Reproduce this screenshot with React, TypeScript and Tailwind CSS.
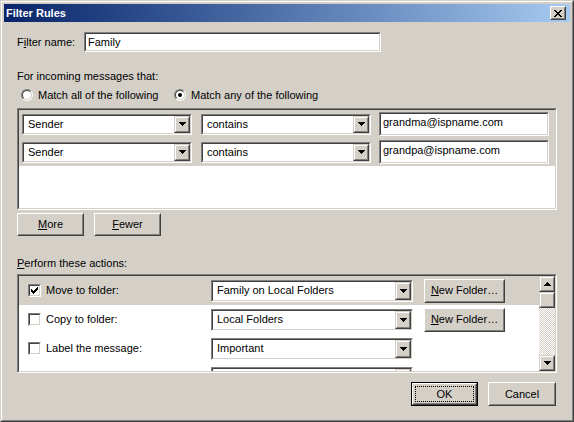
import React from 'react';

type BoxProps = { className?: string; inner?: string; children?: React.ReactNode };

// classic 3D borders
const Sunken: React.FC<BoxProps> = ({ className = '', inner = '', children }) => (
  <div className={`border border-t-[#808080] border-l-[#808080] border-r-white border-b-white ${className}`}>
    <div className={`w-full h-full border border-t-[#404040] border-l-[#404040] border-r-[#d4d0c8] border-b-[#d4d0c8] ${inner}`}>
      {children}
    </div>
  </div>
);

const Raised: React.FC<BoxProps> = ({ className = '', inner = '', children }) => (
  <div className={`bg-[#d4d0c8] border border-t-white border-l-white border-r-[#404040] border-b-[#404040] ${className}`}>
    <div className={`w-full h-full border border-t-[#d4d0c8] border-l-[#d4d0c8] border-r-[#808080] border-b-[#808080] ${inner}`}>
      {children}
    </div>
  </div>
);

const ArrowBox: React.FC<BoxProps> = ({ className = '', inner = '', children }) => (
  <div className={`bg-[#d4d0c8] border border-t-[#d4d0c8] border-l-[#d4d0c8] border-r-[#404040] border-b-[#404040] ${className}`}>
    <div className={`w-full h-full border border-t-white border-l-white border-r-[#808080] border-b-[#808080] flex items-center justify-center ${inner}`}>
      {children}
    </div>
  </div>
);

const DownArrow = () => (
  <svg width="7" height="4" viewBox="0 0 7 4" shapeRendering="crispEdges">
    <path d="M0 0h7v1H0zM1 1h5v1H1zM2 2h3v1H2zM3 3h1v1H3z" fill="#000" />
  </svg>
);

const UpArrow = () => (
  <svg width="7" height="4" viewBox="0 0 7 4" shapeRendering="crispEdges">
    <path d="M3 0h1v1H3zM2 1h3v1H2zM1 2h5v1H1zM0 3h7v1H0z" fill="#000" />
  </svg>
);

const CloseX = () => (
  <svg width="8" height="7" viewBox="0 0 8 7" shapeRendering="crispEdges">
    <path
      d="M0 0h2v1H0zM6 0h2v1H6zM1 1h2v1H1zM5 1h2v1H5zM2 2h4v1H2zM3 3h2v1H3zM2 4h4v1H2zM1 5h2v1H1zM5 5h2v1H5zM0 6h2v1H0zM6 6h2v1H6z"
      fill="#000"
    />
  </svg>
);

const Combo: React.FC<{ className: string; text: string }> = ({ className, text }) => (
  <Sunken className={`shrink-0 ${className}`} inner="bg-white flex items-stretch">
    <span className="flex-1 flex items-center pl-[4px] whitespace-nowrap overflow-hidden">{text}</span>
    <ArrowBox className="w-[16px] shrink-0">
      <DownArrow />
    </ArrowBox>
  </Sunken>
);

const Radio: React.FC<{ checked?: boolean }> = ({ checked }) => (
  <div className="w-[12px] h-[12px] shrink-0 rounded-full border border-t-[#808080] border-l-[#808080] border-r-white border-b-white">
    <div className="w-full h-full rounded-full border border-t-[#404040] border-l-[#404040] border-r-[#d4d0c8] border-b-[#d4d0c8] bg-white flex items-center justify-center">
      {checked && <div className="w-[4px] h-[4px] rounded-full bg-black" />}
    </div>
  </div>
);

const CheckBox: React.FC<{ checked?: boolean }> = ({ checked }) => (
  <Sunken className="w-[13px] h-[13px] shrink-0" inner="bg-white">
    {checked && (
      <svg width="9" height="9" viewBox="0 0 9 9" shapeRendering="crispEdges">
        <path d="M1 3h1v3H1zM2 4h1v3H2zM3 5h1v3H3zM4 4h1v3H4zM5 3h1v3H5zM6 2h1v3H6zM7 1h1v3H7z" fill="#000" />
      </svg>
    )}
  </Sunken>
);

const Button: React.FC<{ className: string; children: React.ReactNode }> = ({ className, children }) => (
  <Raised className={`shrink-0 ${className}`} inner="flex items-center justify-center">
    {children}
  </Raised>
);

const conditions = [
  { field: 'Sender', op: 'contains', value: 'grandma@ispname.com' },
  { field: 'Sender', op: 'contains', value: 'grandpa@ispname.com' },
];

const actions = [
  { label: 'Move to folder:', value: 'Family on Local Folders', checked: true, folder: true, sel: true },
  { label: 'Copy to folder:', value: 'Local Folders', checked: false, folder: true, sel: false },
  { label: 'Label the message:', value: 'Important', checked: false, folder: false, sel: false },
  { label: 'Change the priority to:', value: 'Highest', checked: false, folder: false, sel: false },
];

export default function App() {
  return (
    <div className="w-[574px] h-[422px] bg-[#d4d0c8] text-black text-[11px] leading-[13px] font-['Liberation_Sans',Arial,sans-serif]">
      <div className="h-full border border-t-[#d4d0c8] border-l-[#d4d0c8] border-r-[#404040] border-b-[#404040]">
        <div className="h-full border border-t-white border-l-white border-r-[#808080] border-b-[#808080] p-[2px] flex flex-col">
          {/* title bar */}
          <div className="h-[18px] shrink-0 bg-linear-to-r from-[#0a246a] to-[#a6caf0] flex items-center justify-between pl-[2px] pr-[4px]">
            <span className="font-bold text-white">Filter Rules</span>
            <Raised className="w-[16px] h-[14px]" inner="flex items-center justify-center">
              <CloseX />
            </Raised>
          </div>

          <div className="flex flex-col px-[13px]">
            {/* filter name */}
            <div className="mt-[10px] h-[20px] flex items-center">
              <span className="w-[67px]">
                F<u>i</u>lter name:
              </span>
              <Sunken className="w-[297px] h-[20px]" inner="bg-white flex items-center pl-[2px]">
                Family
              </Sunken>
            </div>

            <div className="mt-[18px] h-[13px]">For incoming messages that:</div>

            <div className="mt-[5px] h-[14px] flex items-center">
              <div className="ml-[4px]">
                <Radio />
              </div>
              <span className="ml-[5px] w-[136px]">Match all of the following</span>
              <Radio checked />
              <span className="ml-[5px]">Match any of the following</span>
            </div>

            {/* conditions list */}
            <Sunken className="mt-[6px] w-[540px] h-[102px]" inner="bg-white flex flex-col">
              {conditions.map((c, i) => (
                <div key={i} className="h-[28px] shrink-0 bg-[#d4d0c8] flex items-center pl-[3px]">
                  <Combo className="w-[170px] h-[21px]" text={c.field} />
                  <Combo className="ml-[9px] w-[170px] h-[21px]" text={c.op} />
                  <Sunken className="ml-[8px] w-[170px] h-[24px]" inner="bg-white pl-[2px] pt-[2px]">
                    {c.value}
                  </Sunken>
                </div>
              ))}
            </Sunken>

            <div className="mt-[3px] flex gap-[10px]">
              <Button className="w-[67px] h-[23px]">
                <u>M</u>ore
              </Button>
              <Button className="w-[67px] h-[23px]">
                <u>F</u>ewer
              </Button>
            </div>

            <div className="mt-[21px] h-[13px]">
              <u>P</u>erform these actions:
            </div>

            {/* actions list */}
            <Sunken className="mt-[4px] w-[540px] h-[99px]" inner="bg-white flex overflow-hidden">
              <div className="flex-1 flex flex-col overflow-hidden">
                {actions.map((a, i) => (
                  <div
                    key={i}
                    className={`h-[29px] shrink-0 flex items-center pl-[9px] ${a.sel ? 'bg-[#d4d0c8]' : 'bg-white'}`}
                  >
                    <CheckBox checked={a.checked} />
                    <span className="ml-[5px] w-[165px] shrink-0 whitespace-nowrap">{a.label}</span>
                    <Combo className="w-[202px] h-[22px]" text={a.value} />
                    {a.folder && (
                      <Button className="ml-[11px] w-[81px] h-[24px]">
                        <span>
                          <u>N</u>ew Folder…
                        </span>
                      </Button>
                    )}
                  </div>
                ))}
              </div>
              <div className="w-[16px] shrink-0 flex flex-col">
                <ArrowBox className="h-[16px] shrink-0">
                  <UpArrow />
                </ArrowBox>
                <ArrowBox className="h-[16px] shrink-0" />
                <div className="flex-1 bg-[image:repeating-conic-gradient(#ffffff_0_25%,#d4d0c8_0_50%)] bg-[length:2px_2px]" />
                <ArrowBox className="h-[16px] shrink-0">
                  <DownArrow />
                </ArrowBox>
              </div>
            </Sunken>

            {/* dialog buttons */}
            <div className="mt-[9px] flex justify-end gap-[10px] pr-[1px]">
              <div className="w-[67px] h-[24px] border border-black">
                <Raised className="w-full h-full" inner="p-[1px]">
                  <div className="w-full h-full border border-dotted border-black flex items-center justify-center">
                    OK
                  </div>
                </Raised>
              </div>
              <Button className="w-[68px] h-[24px]">Cancel</Button>
            </div>
          </div>
        </div>
      </div>
    </div>
  );
}
